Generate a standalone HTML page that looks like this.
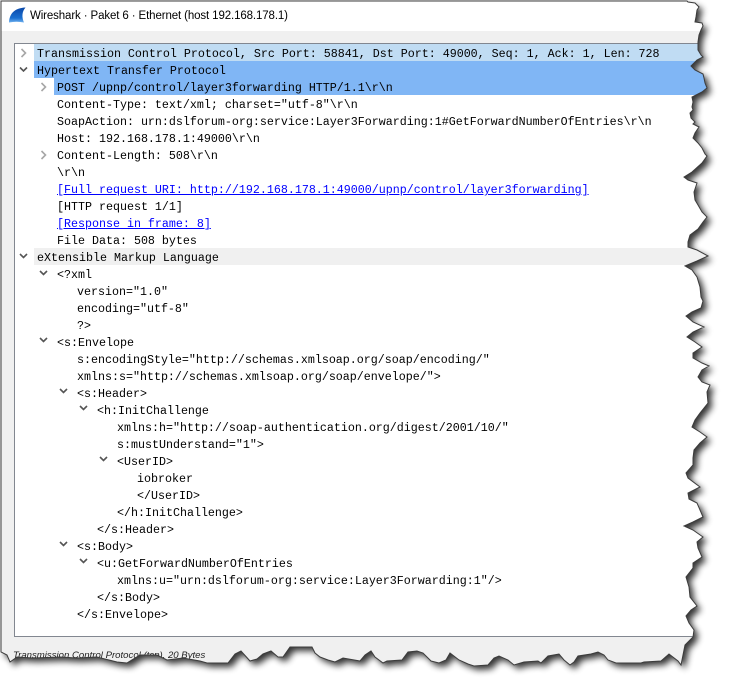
<!DOCTYPE html>
<html><head><meta charset="utf-8"><title>Wireshark</title>
<style>
html,body{margin:0;padding:0;background:#fff;width:731px;height:692px;overflow:hidden}
svg.l{position:absolute;left:0;top:0}
#win{position:absolute;left:0;top:0;width:731px;height:692px;clip-path:url(#c)}
#tb{position:absolute;left:0;top:0;width:731px;height:31px;background:#fff}
#title{position:absolute;left:30px;top:8px;font:11.5px/16px "Liberation Sans",sans-serif;color:#000;white-space:pre;letter-spacing:-.12px}
#panel{position:absolute;left:14px;top:43px;width:720px;height:592px;background:#fff;border:1px solid #828790}
#rows{position:absolute;left:0;top:44px;width:731px;font:11.67px/21px "Liberation Mono",monospace;color:#000}
#rows div{height:17px;white-space:pre;position:relative}
#rows a{color:#00f;text-decoration:underline}
.i0{padding-left:37px}.i1{padding-left:57px}.i2{padding-left:77px}.i3{padding-left:97px}.i4{padding-left:117px}.i5{padding-left:137px}
.a{background:linear-gradient(#c0dcf3,#c0dcf3) 34px 0/100% 17px no-repeat}
.s{background:linear-gradient(#80b6f5,#80b6f5) 34px 0/100% 17px no-repeat}
.t{background:linear-gradient(#80b6f5,#80b6f5) 54px 0/100% 17px no-repeat}
.g{background:linear-gradient(#f0f0f0,#f0f0f0) 34px 0/100% 17px no-repeat}
#st{position:absolute;left:13px;top:649px;font:italic 9.6px/14px "Liberation Sans",sans-serif;color:#222;white-space:pre}
</style></head><body>
<svg class="l" width="731" height="692" viewBox="0 0 731 692">
<defs>
<filter id="sh" x="-5%" y="-5%" width="115%" height="115%"><feGaussianBlur in="SourceAlpha" stdDeviation="3.5"/><feOffset dx="4" dy="4"/><feComponentTransfer><feFuncA type="linear" slope=".8"/></feComponentTransfer></filter>
<path id="e" d="M1 1L687 1L688 2L695 3L699 7L697 10L696 17L695 22L702 23L703 26L701 30L699 35L698 42L698 45L698 50L701 55L703 57L697 60L691 66L695 70L703 74L704 78L705 83L707 88L702 92L692 97L693 102L692 107L693 110L690 113L691 118L695 122L693 124L699 127L695 133L693 138L698 143L702 148L705 154L707 156L702 163L692 172L684 177L688 180L697 183L694 192L695 200L698 205L702 212L707 217L703 222L698 229L690 235L688 242L688 247L697 250L708 256L697 261L685 266L692 270L697 277L700 287L701 297L703 301L701 308L692 312L686 316L693 322L704 327L693 332L687 337L695 342L702 347L693 353L693 358L702 363L709 366L702 370L698 377L702 382L710 385L707 392L708 403L700 413L695 420L692 427L700 432L707 437L700 443L694 450L693 458L693 465L686 473L688 478L700 487L688 493L689 499L697 503L700 510L703 517L693 522L684 526L693 530L703 537L697 542L698 548L702 557L693 563L693 568L686 577L689 587L690 597L697 606L691 610L686 616L689 623L694 630L693 637L685 645L683 655L681 665L678 661L669 654L661 661L644 662L641 663L616 663L608 660L604 655L598 652L591 654L578 656L574 662L570 665L564 660L559 654L548 656L541 663L538 661L524 662L514 665L508 660L499 656L494 658L488 665L474 666L468 664L459 660L450 653L446 660L439 663L431 661L423 653L417 651L408 652L402 660L387 661L383 663L375 657L371 651L365 655L360 661L343 658L335 662L328 660L320 657L315 653L312 647L290 647L283 657L278 657L271 651L263 654L257 659L250 661L241 651L235 654L228 663L218 663L207 663L200 661L183 658L167 660L157 655L140 655L127 663L117 662L97 657L77 658L60 657L33 658L17 657L10 662L7 655L1 652Z"/>
<clipPath id="c"><use href="#e"/></clipPath>
<linearGradient id="fin" x1="0" y1="0" x2="0" y2="1"><stop offset="0" stop-color="#0b48a8"/><stop offset=".7" stop-color="#1a6fd0"/><stop offset="1" stop-color="#6fb0ee"/></linearGradient>
</defs>
<use href="#e" fill="#000" filter="url(#sh)"/>
<use href="#e" fill="#f0f0f0"/>
</svg>
<div id="win">
<div id="tb"></div>
<svg class="l" width="40" height="30"><path d="M9 22.500C9.500 14 14 8 25.500 7.500C22 11.500 21.500 17 24 22.500C19 21.500 14 21.500 9 22.500Z" fill="url(#fin)"/></svg>
<div id="title">Wireshark · Paket 6 · Ethernet (host 192.168.178.1)</div>
<div id="panel"></div>
<div id="rows">
<div class="i0 a">Transmission Control Protocol, Src Port: 58841, Dst Port: 49000, Seq: 1, Ack: 1, Len: 728</div>
<div class="i0 s">Hypertext Transfer Protocol</div>
<div class="i1 t">POST /upnp/control/layer3forwarding HTTP/1.1\r\n</div>
<div class="i1">Content-Type: text/xml; charset="utf-8"\r\n</div>
<div class="i1">SoapAction: urn:dslforum-org:service:Layer3Forwarding:1#GetForwardNumberOfEntries\r\n</div>
<div class="i1">Host: 192.168.178.1:49000\r\n</div>
<div class="i1">Content-Length: 508\r\n</div>
<div class="i1">\r\n</div>
<div class="i1"><a>[Full request URI: http://192.168.178.1:49000/upnp/control/layer3forwarding]</a></div>
<div class="i1">[HTTP request 1/1]</div>
<div class="i1"><a>[Response in frame: 8]</a></div>
<div class="i1">File Data: 508 bytes</div>
<div class="i0 g">eXtensible Markup Language</div>
<div class="i1">&lt;?xml</div>
<div class="i2">version="1.0"</div>
<div class="i2">encoding="utf-8"</div>
<div class="i2">?&gt;</div>
<div class="i1">&lt;s:Envelope</div>
<div class="i2">s:encodingStyle="http://schemas.xmlsoap.org/soap/encoding/"</div>
<div class="i2">xmlns:s="http://schemas.xmlsoap.org/soap/envelope/"&gt;</div>
<div class="i2">&lt;s:Header&gt;</div>
<div class="i3">&lt;h:InitChallenge</div>
<div class="i4">xmlns:h="http://soap-authentication.org/digest/2001/10/"</div>
<div class="i4">s:mustUnderstand="1"&gt;</div>
<div class="i4">&lt;UserID&gt;</div>
<div class="i5">iobroker</div>
<div class="i5">&lt;/UserID&gt;</div>
<div class="i4">&lt;/h:InitChallenge&gt;</div>
<div class="i3">&lt;/s:Header&gt;</div>
<div class="i2">&lt;s:Body&gt;</div>
<div class="i3">&lt;u:GetForwardNumberOfEntries</div>
<div class="i4">xmlns:u="urn:dslforum-org:service:Layer3Forwarding:1"/&gt;</div>
<div class="i3">&lt;/s:Body&gt;</div>
<div class="i2">&lt;/s:Envelope&gt;</div>
</div>
<svg class="l" width="120" height="692" fill="none" stroke-width="1.6">
<g stroke="#a6a6a6"><path d="M21.500 49L25.500 53L21.500 57"/><path d="M41.500 83L45.500 87L41.500 91"/><path d="M41.500 151L45.500 155L41.500 159"/></g>
<g stroke="#555"><path d="M20 67.500L23.500 71L27 67.500"/><path d="M20 254L23.500 257.500L27 254"/><path d="M40 271L43.500 274.500L47 271"/><path d="M40 338L43.500 341.500L47 338"/><path d="M60 389L63.500 392.500L67 389"/><path d="M80 406L83.500 409.500L87 406"/><path d="M100 457L103.500 460.500L107 457"/><path d="M60 542L63.500 545.500L67 542"/><path d="M80 559L83.500 562.500L87 559"/></g>
</svg>
<div id="st">Transmission Control Protocol (tcp), 20 Bytes</div>
</div>
<svg class="l" width="731" height="692"><use href="#e" fill="none" stroke="#3c3c3c" stroke-width="1"/></svg>
</body></html>
